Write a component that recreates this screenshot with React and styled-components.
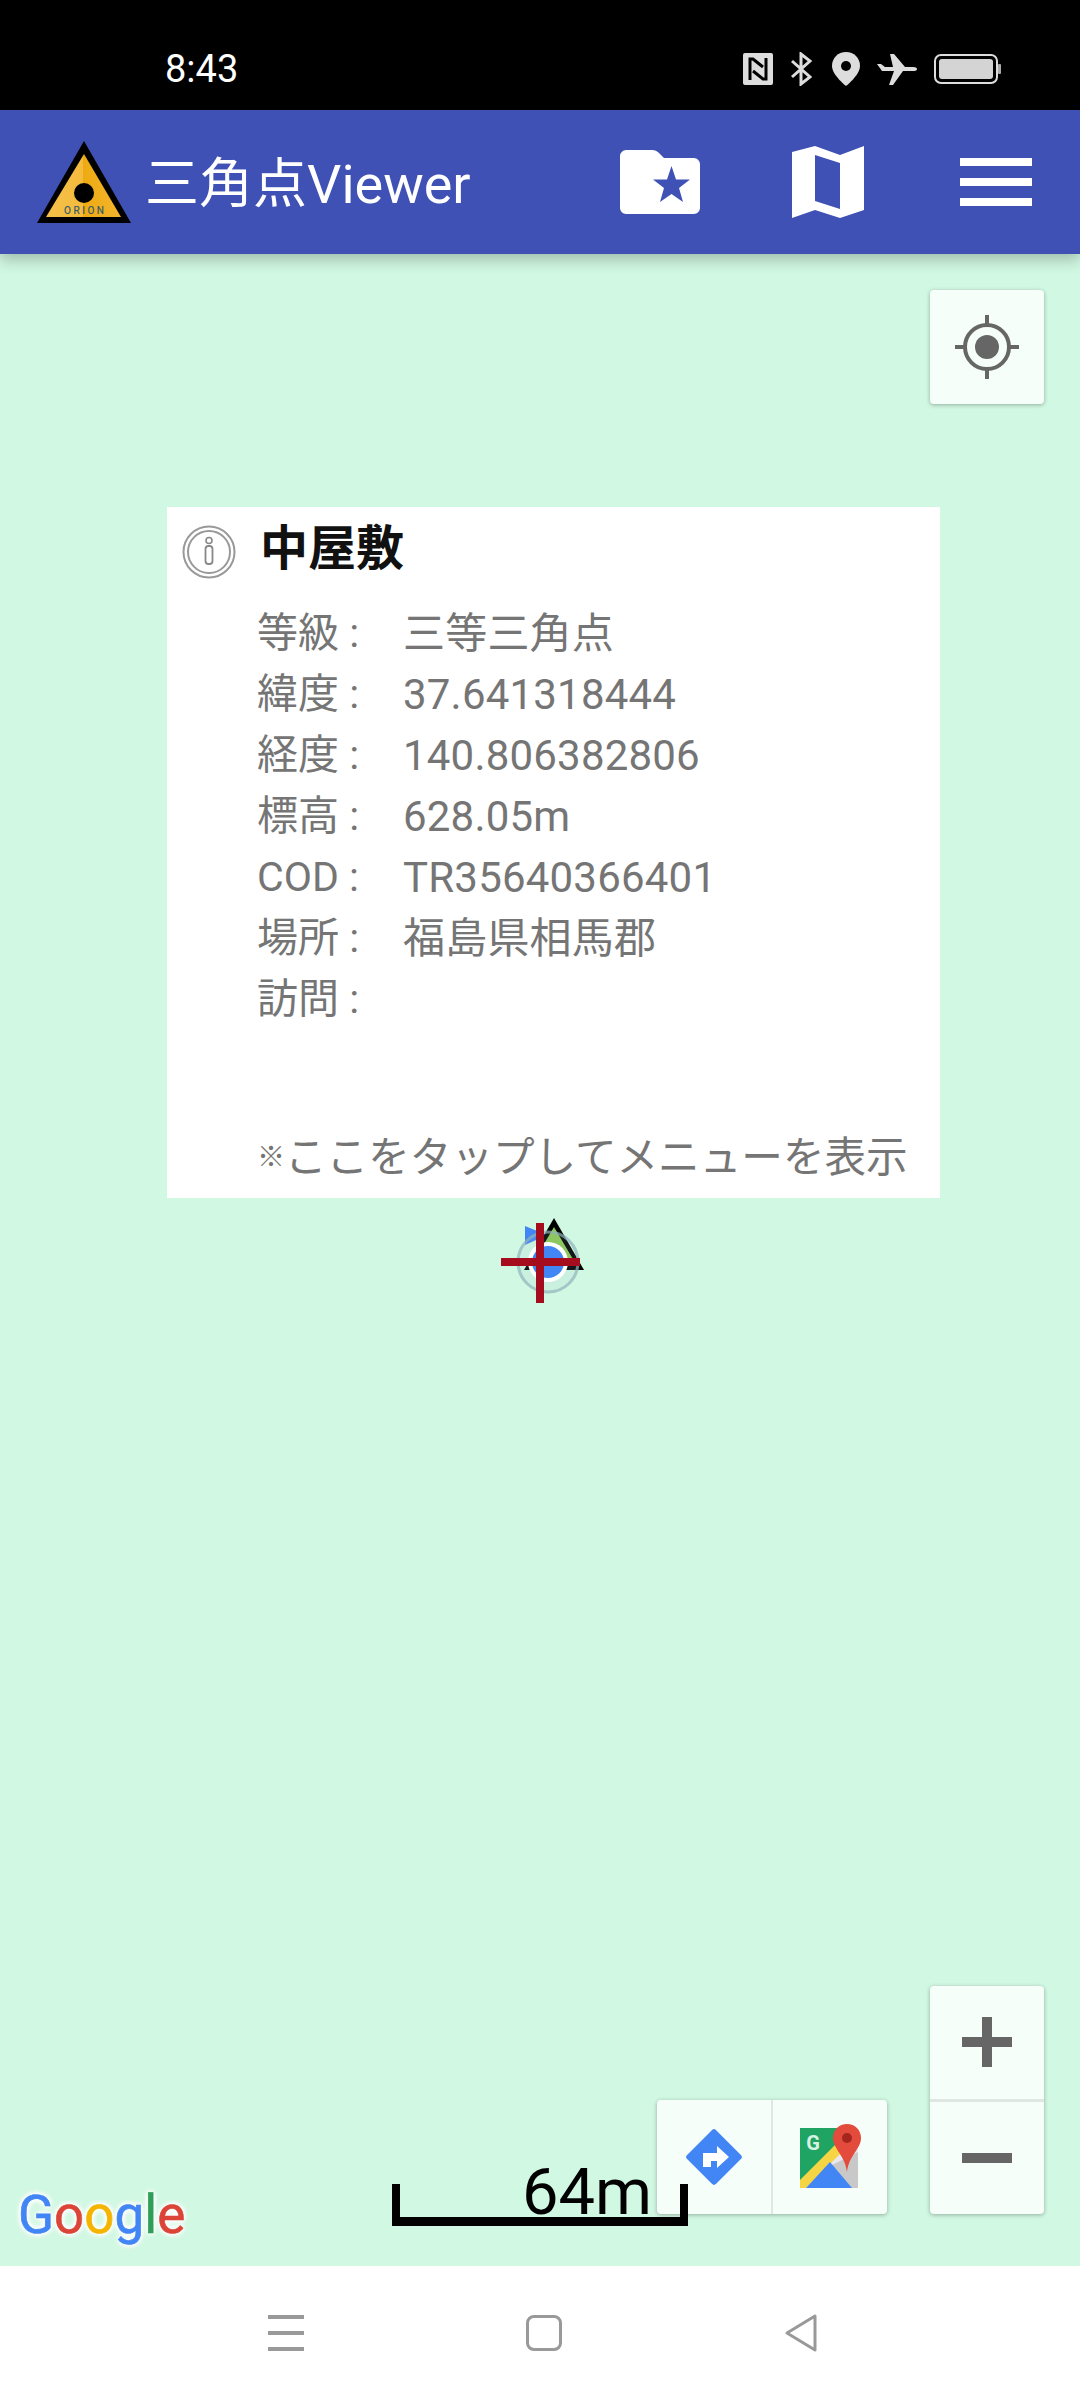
import React from "react";
import styled, { createGlobalStyle } from "styled-components";

const GlobalStyle = createGlobalStyle`
  html, body {
    margin: 0;
    padding: 0;
    background: #fff;
    font-family: Roboto, "Noto Sans CJK JP", sans-serif;
  }
  * {
    box-sizing: border-box;
  }
`;

const Screen = styled.div`
  width: 1080px;
  height: 2400px;
  display: flex;
  flex-direction: column;
  overflow: hidden;
`;

const StatusBar = styled.div`
  height: 110px;
  background: #000;
  display: flex;
  align-items: center;
  justify-content: space-between;
  padding: 30px 79px 0 165px;
  flex-shrink: 0;
`;

const Time = styled.span`
  color: #fff;
  font-size: 38px;
  line-height: 1;
  margin-top: -3px;
`;

const StatusIcons = styled.div`
  display: flex;
  align-items: center;
  gap: 17px;
  margin-top: -2px;

  svg {
    display: block;
  }
`;

const PinIcon = styled.svg`
  margin-left: 3px;
`;

const AppBar = styled.header`
  height: 144px;
  background: #3f51b5;
  display: flex;
  align-items: center;
  padding-left: 37px;
  position: relative;
  z-index: 2;
  flex-shrink: 0;
  box-shadow: 0 6px 14px rgba(0, 0, 0, 0.24);
`;

const Title = styled.h1`
  margin: 5px 0 0 14px;
  color: #fff;
  font-size: 54px;
  font-weight: 400;
  line-height: 1;
  white-space: nowrap;
`;

const Actions = styled.div`
  margin-left: auto;
  display: flex;
`;

const ActionButton = styled.div`
  width: 168px;
  height: 144px;
  display: flex;
  align-items: center;
  justify-content: center;
`;

const Hamburger = styled.div`
  width: 72px;
  display: flex;
  flex-direction: column;
  gap: 12px;

  span {
    height: 8px;
    background: #fff;
  }
`;

const MapArea = styled.main`
  flex: 1;
  position: relative;
  background: #d1f8e2;
`;

const ControlButton = styled.div`
  background: #f6fef9;
  border-radius: 4px;
  box-shadow: 0 1px 4px rgba(0, 0, 0, 0.3);
`;

const LocateButton = styled(ControlButton)`
  position: absolute;
  top: 36px;
  right: 36px;
  width: 114px;
  height: 114px;
  display: flex;
  align-items: center;
  justify-content: center;
`;

const ZoomControl = styled(ControlButton)`
  position: absolute;
  right: 36px;
  bottom: 52px;
  width: 114px;
  height: 228px;
  display: flex;
  flex-direction: column;
`;

const ZoomCell = styled.div`
  flex: 1;
  display: flex;
  align-items: center;
  justify-content: center;
  border-top: ${(props) => (props.$divided ? "3px solid #dfe6e3" : "none")};
`;

const MapToolbar = styled(ControlButton)`
  position: absolute;
  left: 657px;
  bottom: 52px;
  width: 230px;
  height: 114px;
  display: flex;
`;

const ToolCell = styled.div`
  flex: 1;
  display: flex;
  align-items: center;
  justify-content: center;
  border-left: ${(props) => (props.$divided ? "2px solid #dfe6e3" : "none")};
`;

const InfoCard = styled.section`
  position: absolute;
  top: 253px;
  left: 167px;
  width: 773px;
  height: 691px;
  background: #fff;
  padding-left: 90px;
`;

const InfoIcon = styled.svg`
  position: absolute;
  top: 18px;
  left: 15px;
`;

const CardTitle = styled.h2`
  margin: 0 0 0 3px;
  height: 96px;
  display: flex;
  align-items: center;
  padding-bottom: 22px;
  font-size: 48px;
  font-weight: 700;
  color: #111;
`;

const Row = styled.div`
  display: flex;
  height: 61px;
  line-height: 61px;
  font-size: 41px;
  color: #757575;
  white-space: pre;
`;

const RowLabel = styled.span`
  width: 146px;
`;

const RowValue = styled.span`
  font-size: 42px;
  letter-spacing: 0.2px;
`;

const CardHint = styled.div`
  margin-top: 97px;
  height: 61px;
  line-height: 61px;
  display: flex;
  font-size: 41.6px;
  color: #757575;
  white-space: nowrap;
`;

const HintMark = styled.span`
  width: 28px;
  font-size: 28px;
  font-weight: 700;
`;

const Marker = styled.svg`
  position: absolute;
  left: 495px;
  top: 961px;
`;

const GoogleLogo = styled.div`
  position: absolute;
  left: 18px;
  bottom: 24px;
  font-size: 53px;
  line-height: 1;
  letter-spacing: 0;
  -webkit-text-stroke: 0.6px currentColor;
  text-shadow: 0 0 4px #fff, 0 0 6px #fff, 0 0 6px #fff, 0 0 6px #fff;
`;

const GoogleLetter = styled.span`
  color: ${(props) => props.$color};
`;

const ScaleBar = styled.div`
  position: absolute;
  left: 392px;
  bottom: 40px;
  width: 296px;
  height: 42px;
  border: 8px solid #000;
  border-top: none;
  border-bottom-width: 9px;
  display: flex;
  align-items: flex-end;
  justify-content: flex-end;
  padding-right: 28px;
`;

const ScaleLabel = styled.span`
  font-size: 65px;
  line-height: 64px;
  color: #000;
  margin-bottom: -7px;
`;

const NavBar = styled.nav`
  height: 134px;
  background: #fff;
  flex-shrink: 0;
  display: flex;
  align-items: center;
  padding-left: 268px;
  gap: 222px;
  padding-bottom: 1px;
`;

const NavLines = styled.div`
  width: 36px;
  height: 36px;
  display: flex;
  flex-direction: column;
  justify-content: space-between;

  span {
    height: 4px;
    background: #999;
  }
`;

const NavSquare = styled.div`
  width: 36px;
  height: 36px;
  border: 3px solid #999;
  border-radius: 8px;
`;

const StatusIconSet = () => (
  <StatusIcons>
    <svg width="30" height="32" viewBox="0 0 30 32">
      <rect width="30" height="32" rx="2" fill="#ddd" />
      <path d="M7 27V6h3l10 8M23 5v21h-3L10 18" fill="none" stroke="#000" strokeWidth="3" />
    </svg>
    <svg width="22" height="34" viewBox="0 0 22 34">
      <path d="M2 9l18 16-9 7V2l9 7L2 25" fill="none" stroke="#ddd" strokeWidth="3" />
    </svg>
    <PinIcon width="28" height="34" viewBox="0 0 28 34">
      <path d="M14 0C6 0 0 6 0 14c0 9 14 20 14 20s14-11 14-20C28 6 22 0 14 0z" fill="#ddd" />
      <circle cx="14" cy="14" r="5" fill="#000" />
    </PinIcon>
    <svg width="40" height="32" viewBox="0 0 40 32">
      <path d="M0 11h4l4 3h8L13 1h4l11 13h8q4 0 4 2t-4 2H26L16 32h-4l5-14H5z" fill="#ddd" />
    </svg>
    <svg width="67" height="30" viewBox="0 0 67 30">
      <rect x="1" y="1" width="62" height="28" rx="6" fill="none" stroke="#ddd" strokeWidth="2" />
      <rect x="5" y="5" width="54" height="20" rx="3" fill="#d4d4d4" />
      <rect x="64" y="10" width="3" height="10" rx="1" fill="#aaa" />
    </svg>
  </StatusIcons>
);

const Logo = () => (
  <svg width="94" height="82" viewBox="0 0 94 82">
    <defs>
      <linearGradient id="logoFill" x1="0" x2="1" y1="0" y2="0">
        <stop offset="0" stopColor="#f5c04a" />
        <stop offset="0.5" stopColor="#f4bb3c" />
        <stop offset="0.5" stopColor="#eeaa12" />
        <stop offset="1" stopColor="#f2b52e" />
      </linearGradient>
    </defs>
    <polygon points="47,0 94,82 0,82" fill="#000" />
    <polygon points="47,13 84,76 9,76" fill="url(#logoFill)" />
    <circle cx="47" cy="52" r="10" fill="#000" />
    <text x="47" y="73" textAnchor="middle" fontSize="10" fontFamily="Roboto, sans-serif" fill="#33596b" textLength="40" stroke="#33596b" strokeWidth="0.2">
      ORION
    </text>
  </svg>
);

const FolderIcon = () => (
  <svg width="80" height="64" viewBox="0 0 80 64">
    <path
      fill="#fff"
      fillRule="evenodd"
      d="M6 0h26c3 0 5 1 7 3l5 5h30c3 0 6 3 6 6v44c0 3-3 6-6 6H6c-3 0-6-3-6-6V6c0-3 3-6 6-6z"
    />
    <polygon
      fill="#3f51b5"
      points="51.5,16 56,29.5 70,29.5 59,38 63,52 51.5,44 40,52 44,38 33,29.5 47,29.5"
    />
  </svg>
);

const FoldedMapIcon = () => (
  <svg width="72" height="72" viewBox="0 0 72 72">
    <path
      fill="#fff"
      fillRule="evenodd"
      d="M0 6L23 0l25 9L72 0v64l-24 8-25-8-23 8zM23 9v46l25 8V17z"
    />
  </svg>
);

const LocateIcon = () => (
  <svg width="64" height="64" viewBox="0 0 64 64">
    <circle cx="32" cy="32" r="22" fill="none" stroke="#666" strokeWidth="4" />
    <circle cx="32" cy="32" r="12" fill="#666" />
    <path d="M32 0v10M32 54v10M0 32h10M54 32h10" stroke="#666" strokeWidth="4" />
  </svg>
);

const InfoGlyph = () => (
  <InfoIcon width="54" height="54" viewBox="0 0 54 54">
    <circle cx="27" cy="27" r="25.5" fill="none" stroke="#999" strokeWidth="2" />
    <circle cx="27" cy="27" r="21" fill="none" stroke="#999" strokeWidth="2" />
    <circle cx="27" cy="15.5" r="3" fill="none" stroke="#888" strokeWidth="1.6" />
    <rect x="23.5" y="21" width="7" height="18" rx="3" fill="none" stroke="#888" strokeWidth="1.8" />
  </InfoIcon>
);

const MarkerGlyph = () => (
  <Marker width="95" height="95" viewBox="0 0 95 95">
    <polygon points="30,11 52,20 30,30" fill="#4285f4" />
    <polygon points="59,3 89,55 29,55" fill="#000" />
    <polygon points="59,12 82,51 36,51" fill="#8cc850" />
    <circle cx="53" cy="47" r="30" fill="#9cc6cc" fillOpacity="0.12" stroke="#8fb4bc" strokeOpacity="0.7" strokeWidth="3" />
    <circle cx="53" cy="47" r="20" fill="#fff" />
    <circle cx="53" cy="47" r="16" fill="#4285f4" />
    <rect x="6" y="43" width="79" height="8" fill="#a50d1e" />
    <rect x="41" y="8" width="8" height="80" fill="#a50d1e" />
  </Marker>
);

const DirectionIcon = () => (
  <svg width="58" height="58" viewBox="0 0 58 58">
    <rect x="8.5" y="8.5" width="41" height="41" rx="3" fill="#4285f4" transform="rotate(45 29 29)" />
    <path d="M18 39V25h14v-7l12 11-12 11v-7h-6v6z" fill="#fff" />
  </svg>
);

const MapsIcon = () => (
  <svg width="64" height="66" viewBox="0 0 64 66">
    <rect x="2" y="4" width="58" height="60" rx="2" fill="#e8e8ee" />
    <path d="M60 28v36H40L32 42z" fill="#c8c8c8" />
    <path d="M2 4h44v12L2 58z" fill="#1fa463" />
    <path d="M2 56L40 18l6 8L8 64H2z" fill="#f6d545" />
    <path d="M8 64l24-26 22 26z" fill="#4285f4" />
    <text x="15" y="26" textAnchor="middle" fontSize="20" fontWeight="700" fontFamily="Roboto, sans-serif" fill="#d8f2e2">
      G
    </text>
    <path d="M49 0C41 0 35 6 35 14c0 11 12 17 14 34 2-17 14-23 14-34C63 6 57 0 49 0z" fill="#e34b3c" />
    <circle cx="49" cy="14" r="5" fill="#a5261c" />
  </svg>
);

const App = () => {
  const rows = [
    ["等級 :", "三等三角点"],
    ["緯度 :", "37.641318444"],
    ["経度 :", "140.806382806"],
    ["標高 :", "628.05m"],
    ["COD :", "TR35640366401"],
    ["場所 :", "福島県相馬郡"],
    ["訪問 :", ""],
  ];
  const googleLetters = [
    ["G", "#4285f4"],
    ["o", "#db4437"],
    ["o", "#f4b400"],
    ["g", "#4285f4"],
    ["l", "#2f9e58"],
    ["e", "#db4437"],
  ];

  return (
    <Screen>
      <GlobalStyle />
      <StatusBar>
        <Time>8:43</Time>
        <StatusIconSet />
      </StatusBar>
      <AppBar>
        <Logo />
        <Title>三角点Viewer</Title>
        <Actions>
          <ActionButton>
            <FolderIcon />
          </ActionButton>
          <ActionButton>
            <FoldedMapIcon />
          </ActionButton>
          <ActionButton>
            <Hamburger>
              <span />
              <span />
              <span />
            </Hamburger>
          </ActionButton>
        </Actions>
      </AppBar>
      <MapArea>
        <LocateButton>
          <LocateIcon />
        </LocateButton>
        <InfoCard>
          <InfoGlyph />
          <CardTitle>中屋敷</CardTitle>
          {rows.map(([label, value]) => (
            <Row key={label}>
              <RowLabel>{label}</RowLabel>
              <RowValue>{value}</RowValue>
            </Row>
          ))}
          <CardHint>
            <HintMark>※</HintMark>ここをタップしてメニューを表示
          </CardHint>
        </InfoCard>
        <MarkerGlyph />
        <ZoomControl>
          <ZoomCell>
            <svg width="50" height="50" viewBox="0 0 50 50">
              <path d="M20 0h10v20h20v10H30v20H20V30H0V20h20z" fill="#666" />
            </svg>
          </ZoomCell>
          <ZoomCell $divided>
            <svg width="50" height="10" viewBox="0 0 50 10">
              <rect width="50" height="10" fill="#666" />
            </svg>
          </ZoomCell>
        </ZoomControl>
        <MapToolbar>
          <ToolCell>
            <DirectionIcon />
          </ToolCell>
          <ToolCell $divided>
            <MapsIcon />
          </ToolCell>
        </MapToolbar>
        <GoogleLogo>
          {googleLetters.map(([letter, color], i) => (
            <GoogleLetter key={i} $color={color}>
              {letter}
            </GoogleLetter>
          ))}
        </GoogleLogo>
        <ScaleBar>
          <ScaleLabel>64m</ScaleLabel>
        </ScaleBar>
      </MapArea>
      <NavBar>
        <NavLines>
          <span />
          <span />
          <span />
        </NavLines>
        <NavSquare />
        <svg width="34" height="40" viewBox="0 0 34 40">
          <path d="M31 3L3 20l28 17z" fill="none" stroke="#999" strokeWidth="3" strokeLinejoin="round" />
        </svg>
      </NavBar>
    </Screen>
  );
};

export default App;
